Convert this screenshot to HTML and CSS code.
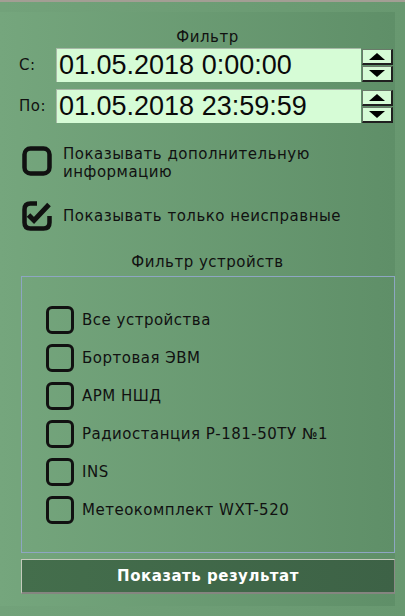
FILE: index.html
```html
<!DOCTYPE html>
<html lang="ru">
<head>
<meta charset="utf-8">
<title>Фильтр</title>
<link rel="stylesheet" href="styles.css">
</head>
<body>
<div class="frame">
  <div class="panel">
    <div class="title">Фильтр</div>

    <div class="date-row">
      <span class="date-label">С:</span>
      <div class="date-input">01.05.2018 0:00:00</div>
      <div class="spin">
        <div class="spin-btn"><span class="tri up"></span></div>
        <div class="spin-btn"><span class="tri down"></span></div>
      </div>
    </div>

    <div class="date-row second">
      <span class="date-label">По:</span>
      <div class="date-input">01.05.2018 23:59:59</div>
      <div class="spin">
        <div class="spin-btn"><span class="tri up"></span></div>
        <div class="spin-btn"><span class="tri down"></span></div>
      </div>
    </div>

    <div class="opt-row multi">
      <svg class="cb-big" viewBox="0 0 30 30" width="30" height="30">
        <rect x="2.5" y="2.5" width="25" height="25" rx="6" fill="none" stroke="#111" stroke-width="4.5"/>
      </svg>
      <span class="opt-text">Показывать дополнительную информацию</span>
    </div>

    <div class="opt-row single">
      <svg class="cb-big" viewBox="0 0 30 30" width="30" height="30">
        <path d="M15 2.5 H8.5 Q2.5 2.5 2.5 8.5 V21.5 Q2.5 27.5 8.5 27.5 H21.5 Q27.5 27.5 27.5 21.5 V15" fill="none" stroke="#111" stroke-width="4.5"/>
        <path d="M6.5 14 L12 19.5 L27 3.5" fill="none" stroke="#111" stroke-width="5" stroke-linejoin="miter"/>
      </svg>
      <span class="opt-text">Показывать только неисправные</span>
    </div>

    <div class="title group-title">Фильтр устройств</div>

    <div class="group">
      <div class="item"><span class="cb"></span><span class="item-text">Все устройства</span></div>
      <div class="item"><span class="cb"></span><span class="item-text">Бортовая ЭВМ</span></div>
      <div class="item"><span class="cb"></span><span class="item-text">АРМ НШД</span></div>
      <div class="item"><span class="cb"></span><span class="item-text">Радиостанция Р-181-50ТУ №1</span></div>
      <div class="item"><span class="cb"></span><span class="item-text">INS</span></div>
      <div class="item"><span class="cb"></span><span class="item-text">Метеокомплект WXT-520</span></div>
    </div>

    <div class="btn">Показать результат</div>
  </div>
</div>
</body>
</html>
```

FILE: styles.css
```css
html, body {
  margin: 0;
  padding: 0;
}
body {
  width: 405px;
  height: 616px;
  overflow: hidden;
  background: linear-gradient(to right, #72a27a, #689870);
  font-family: "DejaVu Sans", Verdana, sans-serif;
  font-size: 15px;
  letter-spacing: 0.5px;
  color: #111;
}
.frame {
  border-top: 2px solid #a39e94;
  padding-top: 10px;
  height: 604px;
  box-sizing: border-box;
}
.panel {
  width: 395px;
  height: 594px;
  background: linear-gradient(to right, #75a67d, #5f8f68);
  display: flex;
  flex-direction: column;
}
.title {
  margin-top: 16px;
  line-height: 18px;
  text-align: center;
  padding-left: 20px;
}
.date-row {
  margin-top: 2px;
  display: flex;
  align-items: center;
  padding-left: 19px;
  height: 34px;
}
.date-row.second {
  margin-top: 7px;
}
.date-label {
  width: 37px;
  flex: none;
}
.date-input {
  width: 305px;
  height: 34px;
  box-sizing: border-box;
  background: #d6fcd6;
  border-top: 1px solid #a8b8a8;
  border-left: 1px solid #a8b8a8;
  font-family: "Liberation Sans", Arial, sans-serif;
  font-size: 27px;
  letter-spacing: 0;
  line-height: 32px;
  padding-left: 2px;
  color: #0a0a0a;
}
.spin {
  margin-left: 1px;
  display: flex;
  flex-direction: column;
  gap: 1px;
}
.spin-btn {
  width: 31px;
  height: 16px;
  box-sizing: border-box;
  background: #d6fcd6;
  border-top: 1px solid #6a7a6a;
  border-left: 1px solid #6a7a6a;
  border-right: 2px solid #202020;
  border-bottom: 2px solid #202020;
  display: flex;
  align-items: center;
  justify-content: center;
}
.tri {
  width: 0;
  height: 0;
  border-left: 8px solid transparent;
  border-right: 8px solid transparent;
}
.tri.up {
  border-bottom: 7px solid #000;
}
.tri.down {
  border-top: 7px solid #000;
}
.opt-row {
  display: flex;
  padding-left: 22px;
  gap: 11px;
}
.opt-row.multi {
  margin-top: 22px;
  align-items: flex-start;
}
.opt-row.multi .cb-big {
  margin-top: 1px;
}
.opt-row.single {
  margin-top: 20px;
  align-items: center;
  height: 30px;
}
.cb-big {
  flex: none;
  display: block;
}
.opt-text {
  width: 320px;
  line-height: 18px;
}
.group-title {
  margin-top: 22px;
}
.group {
  margin-top: 5px;
  margin-left: 21px;
  width: 374px;
  height: 277px;
  box-sizing: border-box;
  border: 1px solid #8ea6c2;
  padding: 29px 0 0 24px;
  display: flex;
  flex-direction: column;
  gap: 10px;
}
.item {
  display: flex;
  align-items: center;
  gap: 8px;
  height: 28px;
}
.cb {
  width: 28px;
  height: 28px;
  box-sizing: border-box;
  border: 3.5px solid #111;
  border-radius: 6px;
  flex: none;
}
.btn {
  margin-top: 6px;
  margin-left: 21px;
  width: 374px;
  height: 35px;
  box-sizing: border-box;
  background: linear-gradient(to right, #446e4c, #3d6246);
  border-top: 1px solid #c4cabc;
  border-left: 1px solid #c4cabc;
  border-right: 1px solid #8a8a86;
  border-bottom: 2px solid #858580;
  color: #fff;
  font-weight: bold;
  text-align: center;
  line-height: 32px;
}
```
